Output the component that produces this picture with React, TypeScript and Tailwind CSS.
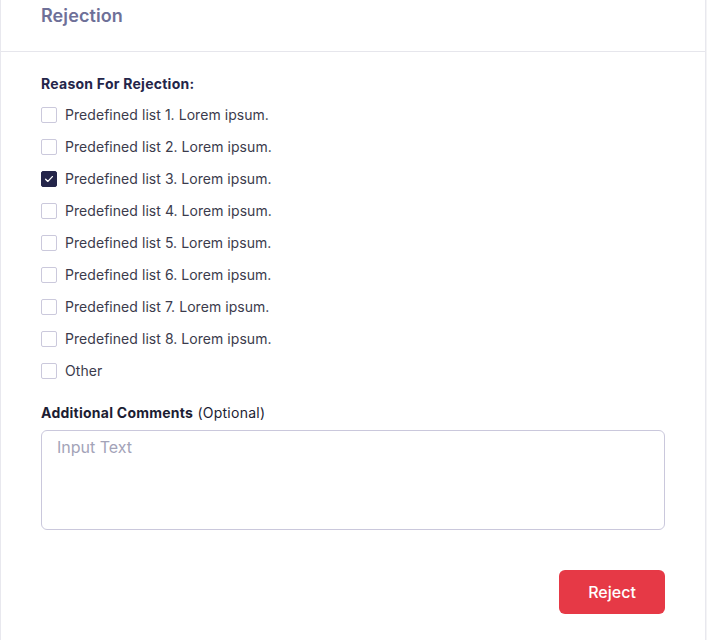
import { useState } from "react";

const REASONS = [
  "Predefined list 1. Lorem ipsum.",
  "Predefined list 2. Lorem ipsum.",
  "Predefined list 3. Lorem ipsum.",
  "Predefined list 4. Lorem ipsum.",
  "Predefined list 5. Lorem ipsum.",
  "Predefined list 6. Lorem ipsum.",
  "Predefined list 7. Lorem ipsum.",
  "Predefined list 8. Lorem ipsum.",
  "Other",
];

function Checkbox({ checked, onChange }: { checked: boolean; onChange: () => void }) {
  return (
    <button
      type="button"
      onClick={onChange}
      className={
        checked
          ? "w-4 h-4 rounded-[2px] bg-[#24254a] border border-[#24254a] flex items-center justify-center"
          : "w-4 h-4 rounded-[2px] bg-white border border-[#cbc9dc]"
      }
    >
      {checked && (
        <svg viewBox="0 0 16 16" className="w-3 h-3" fill="none">
          <path d="M3.5 8.2l3 3 6-6.4" stroke="white" strokeWidth="1.8" strokeLinecap="round" strokeLinejoin="round" />
        </svg>
      )}
    </button>
  );
}

export default function App() {
  const [selected, setSelected] = useState<number[]>([2]);
  const [comment, setComment] = useState("");

  function toggle(i: number) {
    setSelected(selected.includes(i) ? selected.filter((x) => x !== i) : [...selected, i]);
  }

  return (
    <div className="w-[707px] h-[640px] bg-[#f4f4f6] font-['Inter',sans-serif]">
      <div className="w-[706px] h-[640px] bg-white border-l border-r border-[#e8e8ee]">
        {/* Header */}
        <div className="h-[52px] border-b border-[#e6e6ec] px-10 pt-[2px]">
          <h2 className="text-lg leading-7 font-semibold text-[#6e7098] tracking-[0.1px]">Rejection</h2>
        </div>

        {/* Body */}
        <div className="px-10 pt-[22px]">
          <p className="text-sm leading-5 font-bold text-[#24254a] tracking-[0.25px] mb-[5px]">Reason For Rejection:</p>
          <div>
            {REASONS.map((r, i) => (
              <label key={r} className="h-8 flex items-center gap-2 cursor-pointer">
                <Checkbox checked={selected.includes(i)} onChange={() => toggle(i)} />
                <span className="text-sm text-[#3b3b4c] tracking-[0.05px]">{r}</span>
              </label>
            ))}
          </div>

          <p className="mt-4 text-sm leading-5 text-[#1c1d33] tracking-[0.25px]">
            <span className="font-bold">Additional Comments</span> (Optional)
          </p>
          <textarea
            value={comment}
            onChange={(e) => setComment(e.target.value)}
            placeholder="Input Text"
            className="mt-[7px] block w-[624px] h-[100px] resize-none rounded-md border border-[#cac8dc] px-[15px] py-[4px] text-base text-[#24254a] placeholder:text-[#a3a3b8] outline-none"
          />

          <div className="flex justify-end w-[624px] mt-10">
            <button className="w-[106px] h-11 rounded-md bg-[#e63946] text-white text-base font-medium">
              Reject
            </button>
          </div>
        </div>
      </div>
    </div>
  );
}
